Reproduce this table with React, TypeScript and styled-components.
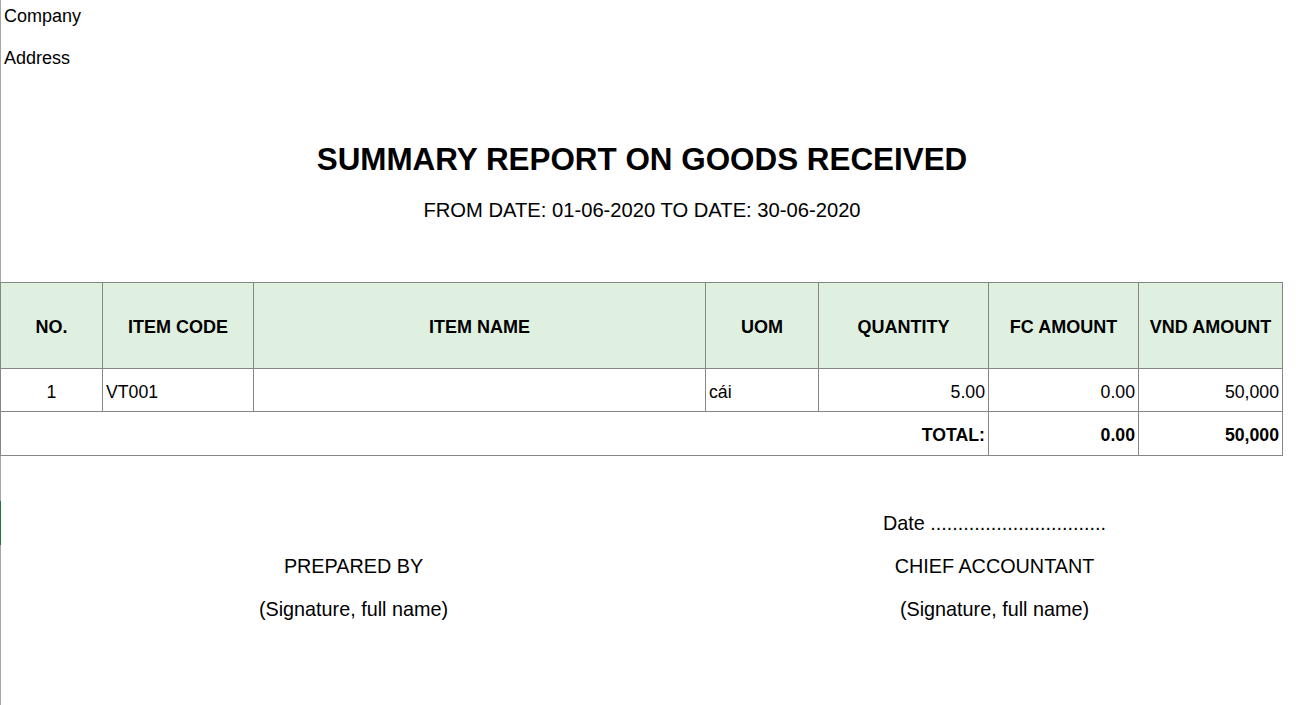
import styled, { createGlobalStyle } from "styled-components";

const GlobalStyle = createGlobalStyle`
    html, body {
        margin: 0;
        padding: 0;
        background: #ffffff;
    }
    body {
        font-family: "Liberation Sans", Arial, sans-serif;
        color: #000000;
    }
`;

const Page = styled.div`
    width: 1299px;
    height: 705px;
    box-sizing: border-box;
    border-left: 1px solid #a6a6a6;
`;

const TopInfo = styled.div`
    padding-left: 3px;
    display: flex;
    flex-direction: column;
`;

const InfoLine = styled.div<{ $top: number; $height: number }>`
    margin-top: ${(p) => p.$top}px;
    height: ${(p) => p.$height}px;
    line-height: ${(p) => p.$height}px;
    font-size: 18px;
`;

const Heading = styled.div`
    width: 1282px;
    margin-top: 72px;
    display: flex;
    flex-direction: column;
    align-items: center;
`;

const Title = styled.h1`
    margin: 0;
    height: 40px;
    line-height: 40px;
    font-size: 31.4px;
    font-weight: 700;
`;

const Subtitle = styled.div`
    margin-top: 18px;
    height: 24px;
    line-height: 24px;
    font-size: 20.2px;
`;

const Table = styled.table`
    margin-top: 60px;
    margin-left: -1px;
    border-collapse: collapse;
    table-layout: fixed;
    width: 1283px;
    font-size: 17.7px;
`;

const HeadCell = styled.th`
    background: #e0f0e0;
    border: 1px solid #868686;
    font-weight: 700;
    font-size: 18px;
    text-align: center;
    vertical-align: middle;
    padding: 4px 2px 0;
    height: 81px;
`;

const Cell = styled.td<{ $align?: "left" | "right" | "center"; $bold?: boolean; $height?: number }>`
    border: 1px solid #868686;
    text-align: ${(p) => p.$align ?? "left"};
    font-weight: ${(p) => (p.$bold ? 700 : 400)};
    vertical-align: middle;
    padding: 4px 3px 0;
    height: ${(p) => p.$height ?? 38}px;
    white-space: nowrap;
`;

const Signatures = styled.div`
    margin-top: 45px;
    display: flex;
    flex-direction: column;
`;

const SignRow = styled.div<{ $marked?: boolean; $height: number }>`
    display: grid;
    grid-template-columns: 705px 577px;
    height: ${(p) => p.$height}px;
    align-items: center;
    font-size: 19.8px;
    margin-left: -1px;
    border-left: 1px solid ${(p) => (p.$marked ? "#217346" : "transparent")};
`;

const SignText = styled.div<{ $col: number }>`
    grid-column: ${(p) => p.$col};
    text-align: center;
`;

const columns = [102, 151, 452, 113, 170, 150, 144];

export default function App() {
    return (
        <>
            <GlobalStyle />
            <Page>
                <TopInfo>
                    <InfoLine $top={0} $height={32}>Company</InfoLine>
                    <InfoLine $top={16} $height={20}>Address</InfoLine>
                </TopInfo>
                <Heading>
                    <Title>SUMMARY REPORT ON GOODS RECEIVED</Title>
                    <Subtitle>FROM DATE: 01-06-2020 TO DATE: 30-06-2020</Subtitle>
                </Heading>
                <Table>
                    <colgroup>
                        {columns.map((w, i) => (
                            <col key={i} style={{ width: w }} />
                        ))}
                    </colgroup>
                    <thead>
                        <tr>
                            <HeadCell>NO.</HeadCell>
                            <HeadCell>ITEM CODE</HeadCell>
                            <HeadCell>ITEM NAME</HeadCell>
                            <HeadCell>UOM</HeadCell>
                            <HeadCell>QUANTITY</HeadCell>
                            <HeadCell>FC AMOUNT</HeadCell>
                            <HeadCell>VND AMOUNT</HeadCell>
                        </tr>
                    </thead>
                    <tbody>
                        <tr>
                            <Cell $align="center">1</Cell>
                            <Cell>VT001</Cell>
                            <Cell></Cell>
                            <Cell>cái</Cell>
                            <Cell $align="right">5.00</Cell>
                            <Cell $align="right">0.00</Cell>
                            <Cell $align="right">50,000</Cell>
                        </tr>
                        <tr>
                            <Cell colSpan={5} $align="right" $bold $height={39}>TOTAL:</Cell>
                            <Cell $align="right" $bold $height={39}>0.00</Cell>
                            <Cell $align="right" $bold $height={39}>50,000</Cell>
                        </tr>
                    </tbody>
                </Table>
                <Signatures>
                    <SignRow $marked $height={44}>
                        <SignText $col={2}>Date ................................</SignText>
                    </SignRow>
                    <SignRow $height={43}>
                        <SignText $col={1}>PREPARED BY</SignText>
                        <SignText $col={2}>CHIEF ACCOUNTANT</SignText>
                    </SignRow>
                    <SignRow $height={43}>
                        <SignText $col={1}>(Signature, full name)</SignText>
                        <SignText $col={2}>(Signature, full name)</SignText>
                    </SignRow>
                </Signatures>
            </Page>
        </>
    );
}
